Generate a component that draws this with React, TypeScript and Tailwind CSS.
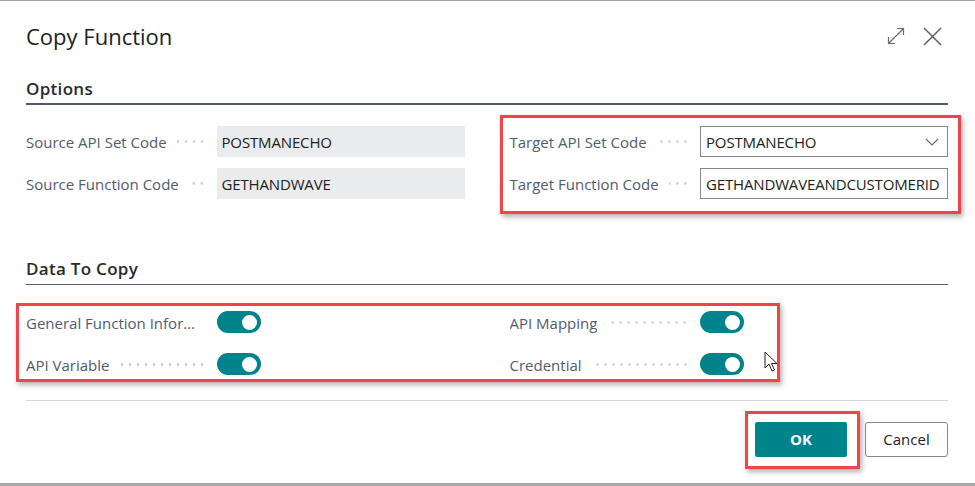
import { ReactNode } from 'react'

const dots =
  'flex-1 self-center h-[3px] bg-[radial-gradient(circle,#c3c6ca_1px,transparent_1.4px)] bg-[length:8px_3px] bg-repeat-x bg-right'

function Field({
  label,
  value,
  editable = false,
  select = false,
}: {
  label: string
  value: string
  editable?: boolean
  select?: boolean
}) {
  return (
    <div className="flex items-center h-[31px]">
      <span className="text-[15px] text-[#505c6d] whitespace-nowrap pt-[2px]">{label}</span>
      <span className={`${dots} ml-[10px] mr-[11px]`} />
      <div
        className={`w-[248px] h-[31px] shrink-0 flex items-center pl-[5px] text-[15px] text-[#212121] ${
          editable ? 'bg-white border border-[#8a8886]' : 'bg-[#eaebed]'
        } ${select ? 'pr-[8px]' : 'pr-[1px]'}`}
      >
        <span className="flex-1 whitespace-nowrap overflow-hidden pt-[1px] tracking-[-0.15px]">{value}</span>
        {select && (
          <svg width="14" height="8" viewBox="0 0 14 8" className="ml-1">
            <path d="M1 1l6 6 6-6" fill="none" stroke="#666" strokeWidth="1.1" />
          </svg>
        )}
      </div>
    </div>
  )
}

function Toggle() {
  return (
    <div className="w-[44px] h-[22px] shrink-0 rounded-full bg-[#00838a] flex items-center justify-end pr-[4px]">
      <div className="w-[15px] h-[15px] rounded-full bg-white" />
    </div>
  )
}

function ToggleRow({ label }: { label: string }) {
  return (
    <div className="flex items-center h-[32px]">
      <span className="text-[15px] text-[#505c6d] whitespace-nowrap overflow-hidden text-ellipsis max-w-[173px] pt-[2px]">
        {label}
      </span>
      <span className={`${dots} ml-[10px] mr-[11px]`} />
      <div className="w-[248px] shrink-0">
        <Toggle />
      </div>
    </div>
  )
}

function SectionHeading({ children, thick = false }: { children: ReactNode; thick?: boolean }) {
  return (
    <div
      className={`h-[24px] leading-[24px] text-[17px] font-semibold tracking-[0.3px] text-[#2a2a2a] box-content ${
        thick ? 'pb-[2px] border-b-2 border-[#4f596a]' : 'pb-[3px] border-b border-[#5a5e66]'
      }`}
    >
      {children}
    </div>
  )
}

const annotate = 'absolute border-[3px] border-[#f0434a] shadow-[2px_3px_5px_rgba(0,0,0,0.3)] pointer-events-none'

export default function App() {
  return (
    <div className="w-[975px] h-[486px] bg-white relative overflow-hidden flex flex-col border-t border-[#a3a3a3] font-['Segoe_UI','Open_Sans',sans-serif]">
      <div className="flex items-center justify-between pl-[26px] pr-[33px] pt-[21px]">
        <h1 className="h-[28px] leading-[28px] text-[22px] text-[#212121]">Copy Function</h1>
        <div className="flex items-center gap-[18px]">
          <svg width="18" height="18" viewBox="0 0 18 18">
            <path
              d="M1.5 16.5L16.5 1.5M10 1.5h6.5V8M1.5 10v6.5H8"
              fill="none"
              stroke="#6b6b6b"
              strokeWidth="1.2"
            />
          </svg>
          <svg width="19" height="19" viewBox="0 0 19 19">
            <path d="M1 1l17 17M18 1L1 18" fill="none" stroke="#5f5f5f" strokeWidth="1.5" />
          </svg>
        </div>
      </div>

      <div className="flex flex-col pr-[27px] pl-[26px] mt-[27px]">
        <SectionHeading thick>Options</SectionHeading>
        <div className="grid grid-cols-2 gap-x-[45px] mt-[21px]">
          <div className="flex flex-col gap-[11px]">
            <Field label="Source API Set Code" value="POSTMANECHO" />
            <Field label="Source Function Code" value="GETHANDWAVE" />
          </div>
          <div className="flex flex-col gap-[11px] relative">
            <Field label="Target API Set Code" value="POSTMANECHO" editable select />
            <Field label="Target Function Code" value="GETHANDWAVEANDCUSTOMERID" editable />
            <div className={`${annotate} -left-[10px] -right-[13px] -top-[11px] -bottom-[15px]`} />
          </div>
        </div>

        <div className="mt-[58px]">
          <SectionHeading>Data To Copy</SectionHeading>
        </div>
        <div className="grid grid-cols-2 gap-x-[45px] mt-[21px] relative">
          <div className="flex flex-col gap-[10px]">
            <ToggleRow label="General Function Information" />
            <ToggleRow label="API Variable" />
          </div>
          <div className="flex flex-col gap-[10px]">
            <ToggleRow label="API Mapping" />
            <ToggleRow label="Credential" />
          </div>
          <div className={`${annotate} -left-[10px] right-[168px] -top-[3px] -bottom-[2px]`} />
          <svg
            width="14"
            height="21"
            viewBox="0 0 14 21"
            className="absolute left-[738px] top-[45px]"
          >
            <path
              d="M1 1v16l4-4 3 7 2.5-1-3-6.5H13z"
              fill="#fff"
              stroke="#222"
              strokeWidth="1"
              strokeLinejoin="round"
            />
          </svg>
        </div>

        <div className="mt-[20px] border-t border-[#d6d6d6]" />

        <div className="flex justify-end gap-[18px] mt-[21px]">
          <div className="relative">
            <button className="w-[92px] h-[35px] rounded-[2px] bg-[#00838a] text-white text-[15px] font-bold">
              OK
            </button>
            <div className={`${annotate} -left-[10px] -right-[13px] -top-[11px] -bottom-[12px]`} />
          </div>
          <button className="w-[83px] h-[35px] rounded-[3px] bg-white border border-[#8a8886] text-[15px] text-[#212121]">
            Cancel
          </button>
        </div>
      </div>

      <div className="absolute left-0 right-0 bottom-0 h-[3px] bg-[#a9a9a9]" />
    </div>
  )
}
